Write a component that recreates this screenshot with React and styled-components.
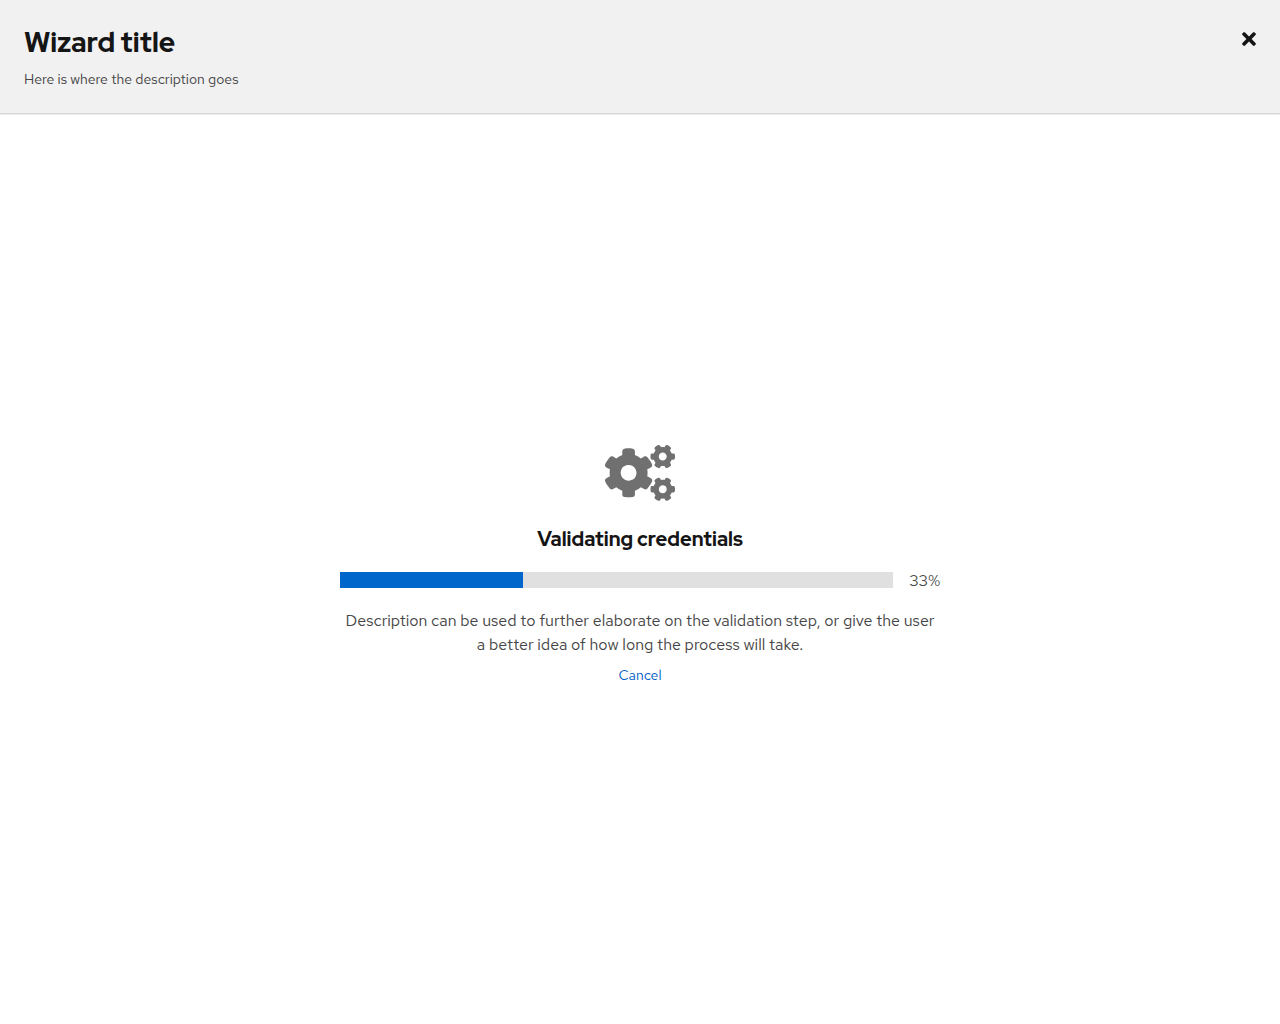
import React from "react";
import styled, { createGlobalStyle } from "styled-components";
import { FaTimes, FaCogs } from "react-icons/fa";

const GlobalStyle = createGlobalStyle`
  * { box-sizing: border-box; }
  body { margin: 0; background: #fff; font-family: "Red Hat Text", Lato, "Liberation Sans", sans-serif; }
  h1, h2, p { margin: 0; }
`;

const Wizard = styled.div`
  display: flex;
  flex-direction: column;
  height: 100vh;
  overflow: hidden;
`;

const Header = styled.header`
  display: flex;
  justify-content: space-between;
  align-items: flex-start;
  height: 114px;
  padding: 24px 21px 24px 24px;
  background: #f1f1f1;
  border-bottom: 1px solid #d7d7d7;
  box-shadow: 0 1px #ececec;
`;

const Title = styled.h1`
  font: 800 28px/36px "Red Hat Display", Inter, sans-serif;
  letter-spacing: -0.06px;
  color: #151515;
  white-space: nowrap;
`;

const Subtitle = styled.p`
  padding-top: 9px;
  font-size: 14px;
  line-height: 21px;
  color: #454545;
  white-space: nowrap;
`;

const CloseButton = styled.button`
  display: flex;
  padding: 4.5px 0;
  border: 0;
  background: none;
  color: #151515;
`;

const Main = styled.main`
  flex: 1;
  display: flex;
  align-items: center;
  justify-content: center;
  padding-bottom: 7px;
`;

const EmptyState = styled.section`
  display: flex;
  flex-direction: column;
  align-items: center;
  width: 600px;
`;

const StateIcon = styled.div`
  display: flex;
  color: #707070;

  svg {
    width: 70px;
    height: 56px;
  }
`;

const StateTitle = styled.h2`
  margin-top: 23px;
  font: 800 20px/30px "Red Hat Display", Inter, sans-serif;
  color: #151515;
  white-space: nowrap;
`;

const Progress = styled.div`
  display: flex;
  align-items: center;
  gap: 16px;
  width: 100%;
  margin-top: 13px;
`;

const Track = styled.div`
  flex: 1;
  height: 16px;
  background: #e0e0e0;
`;

const Bar = styled.div`
  width: ${(p) => p.$value}%;
  height: 100%;
  background: #06c;
`;

const Measure = styled.span`
  margin-top: 2px;
  font-size: 16px;
  line-height: 24px;
  color: #454545;
  white-space: nowrap;
`;

const Description = styled.p`
  margin-top: 16px;
  font-size: 16px;
  line-height: 24px;
  color: #454545;
  text-align: center;
`;

const CancelButton = styled.button`
  margin-top: 8px;
  padding: 0;
  border: 0;
  background: none;
  font: 400 14px/21px "Red Hat Text", Lato, sans-serif;
  color: #0060c4;
`;

export default function App() {
  return (
    <Wizard>
      <GlobalStyle />
      <Header>
        <div>
          <Title>Wizard title</Title>
          <Subtitle>Here is where the description goes</Subtitle>
        </div>
        <CloseButton aria-label="Close"><FaTimes size={20} /></CloseButton>
      </Header>
      <Main>
        <EmptyState>
          <StateIcon><FaCogs /></StateIcon>
          <StateTitle>Validating credentials</StateTitle>
          <Progress>
            <Track><Bar $value={33} /></Track>
            <Measure>33%</Measure>
          </Progress>
          <Description>
            Description can be used to further elaborate on the validation step, or give the user a better idea of how long the process will take.
          </Description>
          <CancelButton>Cancel</CancelButton>
        </EmptyState>
      </Main>
    </Wizard>
  );
}
